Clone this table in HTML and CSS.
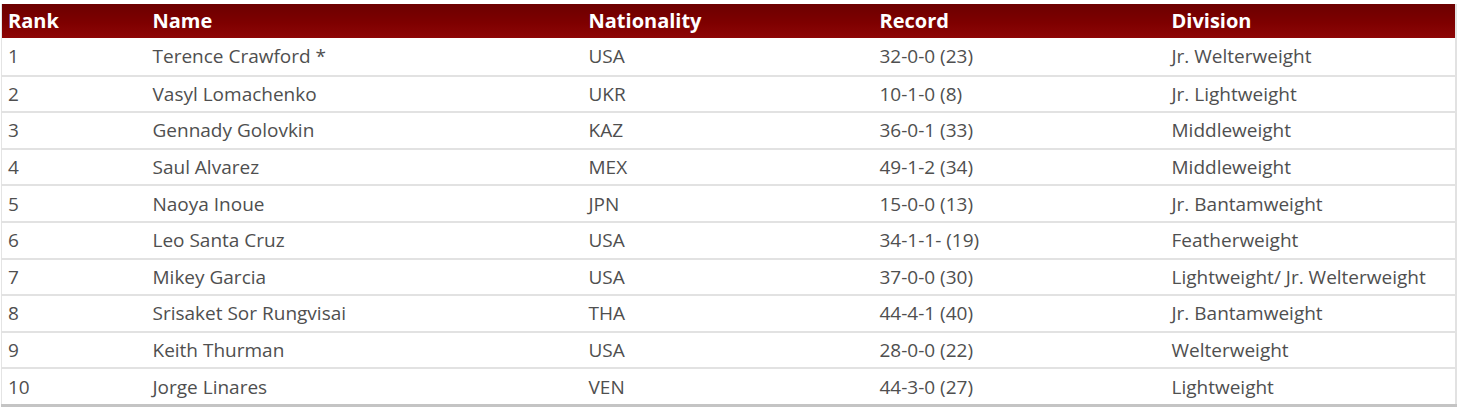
FILE: index.html
```html
<!DOCTYPE html>
<html>
<head>
<meta charset="utf-8">
<link rel="stylesheet" href="styles.css">
</head>
<body>
<div class="wrap">
<table class="rank-table">
<colgroup>
<col class="c1"><col class="c2"><col class="c3"><col class="c4"><col class="c5">
</colgroup>
<thead>
<tr><th>Rank</th><th>Name</th><th>Nationality</th><th>Record</th><th>Division</th></tr>
</thead>
<tbody>
<tr><td>1</td><td>Terence Crawford *</td><td>USA</td><td>32-0-0 (23)</td><td>Jr. Welterweight</td></tr>
<tr><td>2</td><td>Vasyl Lomachenko</td><td>UKR</td><td>10-1-0 (8)</td><td>Jr. Lightweight</td></tr>
<tr><td>3</td><td>Gennady Golovkin</td><td>KAZ</td><td>36-0-1 (33)</td><td>Middleweight</td></tr>
<tr><td>4</td><td>Saul Alvarez</td><td>MEX</td><td>49-1-2 (34)</td><td>Middleweight</td></tr>
<tr><td>5</td><td>Naoya Inoue</td><td>JPN</td><td>15-0-0 (13)</td><td>Jr. Bantamweight</td></tr>
<tr><td>6</td><td>Leo Santa Cruz</td><td>USA</td><td>34-1-1- (19)</td><td>Featherweight</td></tr>
<tr><td>7</td><td>Mikey Garcia</td><td>USA</td><td>37-0-0 (30)</td><td>Lightweight/ Jr. Welterweight</td></tr>
<tr><td>8</td><td>Srisaket Sor Rungvisai</td><td>THA</td><td>44-4-1 (40)</td><td>Jr. Bantamweight</td></tr>
<tr><td>9</td><td>Keith Thurman</td><td>USA</td><td>28-0-0 (22)</td><td>Welterweight</td></tr>
<tr><td>10</td><td>Jorge Linares</td><td>VEN</td><td>44-3-0 (27)</td><td>Lightweight</td></tr>
</tbody>
</table>
</div>
</body>
</html>
```
FILE: styles.css
```css
html, body {
  margin: 0;
  padding: 0;
  background: #fff;
}
.wrap {
  padding: 4px 3px 0 1px;
}
.rank-table {
  width: 100%;
  border-collapse: collapse;
  table-layout: fixed;
  font-family: "Open Sans", "Liberation Sans", sans-serif;
  font-size: 19px;
  border-left: 1px solid #e4e4e4;
  border-right: 2px solid #e2e2e2;
  border-bottom: 3px solid #c4c4c4;
}
.c1 { width: 145px; }
.c2 { width: 436px; }
.c3 { width: 291px; }
.c4 { width: 292px; }
.c5 { width: auto; }
.rank-table thead tr {
  background: linear-gradient(to bottom, #6c0000 0%, #7e0000 55%, #8e0606 100%);
}
.rank-table th {
  height: 34px;
  padding: 0 6px;
  text-align: left;
  color: #fff;
  font-weight: 700;
  font-size: 20px;
  line-height: 34px;
  vertical-align: middle;
}
.rank-table td {
  height: 34.6px;
  padding: 0 6px;
  color: #4f4f4f;
  line-height: 34px;
  border-top: 2px solid #e2e2e2;
  vertical-align: middle;
  white-space: nowrap;
}
.rank-table tbody tr:first-child td {
  border-top: none;
  height: 36.6px;
}
```
